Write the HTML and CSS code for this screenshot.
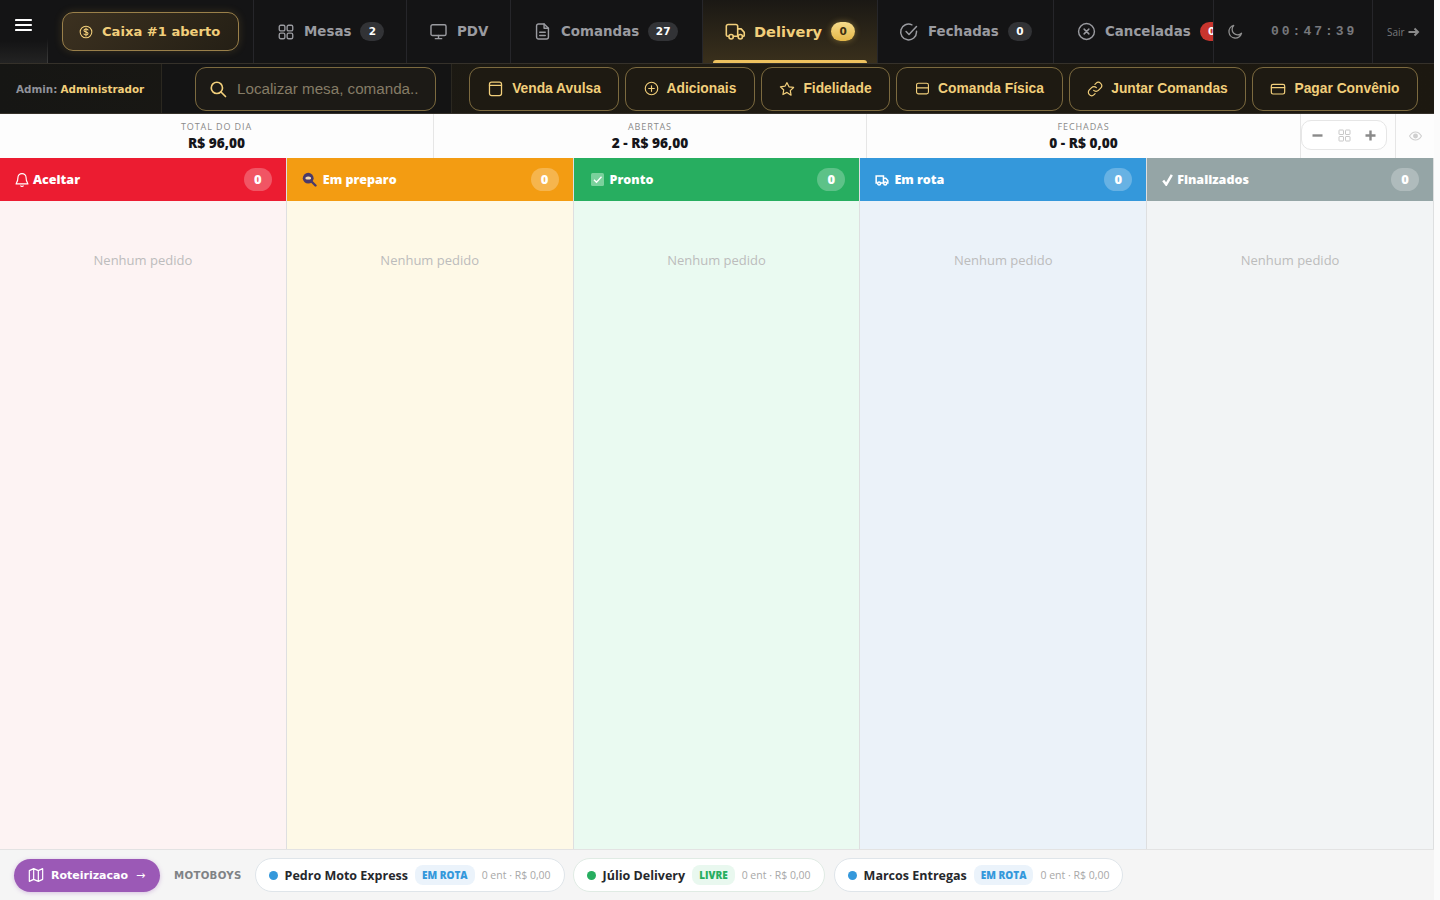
FILE: index.html
```html
<!DOCTYPE html>
<html lang="pt-BR">
<head>
    <meta charset="UTF-8">
    <title>Delivery</title>
    <link rel="stylesheet" href="styles.css">
</head>
<body>
<div class="page">

    <div class="topbar">
        <div class="menu-cell">
            <svg width="18" height="14" viewBox="0 0 18 14"><path d="M1 2h15M1 7h15M1 12h15" stroke="#fff" stroke-width="2.200" stroke-linecap="round"/></svg>
        </div>
        <div class="caixa-cell">
            <div class="caixa-btn">
                <svg class="ico" width="14" height="14" viewBox="0 0 24 24"><circle cx="12" cy="12" r="10"/><path d="M15.500 8.500c-.6-1-1.900-1.500-3.500-1.500-2 0-3.500 1-3.500 2.500s1.500 2 3.500 2.500 3.500 1 3.500 2.500-1.500 2.500-3.500 2.500c-1.600 0-2.900-.5-3.500-1.500M12 5v14"/></svg>
                <span>Caixa #1 aberto</span>
            </div>
        </div>
        <div class="tab tab-mesas">
            <svg class="ico" width="18" height="18" viewBox="0 0 24 24"><rect x="3" y="3" width="7.500" height="7.500" rx="2"/><rect x="13.500" y="3" width="7.500" height="7.500" rx="2"/><rect x="3" y="13.500" width="7.500" height="7.500" rx="2"/><rect x="13.500" y="13.500" width="7.500" height="7.500" rx="2"/></svg>
            <span>Mesas</span><b class="pill">2</b>
        </div>
        <div class="tab tab-pdv">
            <svg class="ico" width="19" height="19" viewBox="0 0 24 24"><rect x="2.500" y="3.500" width="19" height="13.500" rx="2"/><path d="M12 17v4M8 21h8"/></svg>
            <span>PDV</span>
        </div>
        <div class="tab tab-comandas">
            <svg class="ico" width="19" height="19" viewBox="0 0 24 24"><path d="M14 2.500H7a2.500 2.500 0 0 0-2.500 2.500v14A2.500 2.500 0 0 0 7 21.500h10a2.500 2.500 0 0 0 2.500-2.500V8z"/><path d="M14 2.500V8h5.500M8.500 13h7M8.500 17h7"/></svg>
            <span>Comandas</span><b class="pill">27</b>
        </div>
        <div class="tab tab-delivery active">
            <svg class="ico" width="21" height="21" viewBox="0 0 24 24"><path d="M14.500 17.500V6a2 2 0 0 0-2-2H3.500a2 2 0 0 0-2 2v10a1.500 1.500 0 0 0 1.500 1.500h1M9.500 17.500h5M14.500 9h4l3.500 4v3.500a1 1 0 0 1-1 1h-1"/><circle cx="7" cy="18" r="2.500"/><circle cx="17.500" cy="18" r="2.500"/></svg>
            <span>Delivery</span><b class="pill pill-gold">0</b>
        </div>
        <div class="tab tab-fechadas">
            <svg class="ico" width="20" height="20" viewBox="0 0 24 24"><path d="M21 11v1a9.500 9.500 0 1 1-5.500-8.600"/><path d="M8.500 11.500l3.500 3.500 9-9.500"/></svg>
            <span>Fechadas</span><b class="pill">0</b>
        </div>
        <div class="tab tab-canceladas">
            <svg class="ico" width="19" height="19" viewBox="0 0 24 24"><circle cx="12" cy="12" r="10"/><path d="M9 9l6 6M15 9l-6 6"/></svg>
            <span>Canceladas</span><b class="pill pill-red">0</b>
        </div>
        <div class="top-right">
            <div class="moon">
                <svg class="ico" width="17" height="17" viewBox="0 0 24 24"><path d="M20.500 14.500A9 9 0 1 1 9.500 3.500a7.500 7.500 0 0 0 11 11z"/></svg>
            </div>
            <div class="clock">00:47:39</div>
            <div class="sair">Sair <svg width="12" height="10" viewBox="0 0 12 10"><path d="M0.500 5h9M6.500 1.500L10 5l-3.500 3.500" fill="none" stroke="#8a8a8a" stroke-width="2"/></svg></div>
        </div>
    </div>

    <div class="toolbar">
        <div class="admin"><span>Admin:</span> <b>Administrador</b></div>
        <div class="search-cell">
            <div class="search">
                <svg class="ico" width="18" height="18" viewBox="0 0 24 24"><circle cx="10.500" cy="10.500" r="7.500"/><path d="M16 16l6 6"/></svg>
                <span>Localizar mesa, comanda..</span>
            </div>
        </div>
        <div class="actions">
            <div class="act act-venda"><svg class="ico" width="17" height="17" viewBox="0 0 24 24"><rect x="3.500" y="3" width="17" height="19" rx="3"/><path d="M3.500 7.500h17"/></svg><span>Venda Avulsa</span></div>
            <div class="act act-adic"><svg class="ico" width="15" height="15" viewBox="0 0 24 24"><circle cx="12" cy="12" r="10"/><path d="M12 7.500v9M7.500 12h9"/></svg><span>Adicionais</span></div>
            <div class="act act-fid"><svg class="ico" width="16" height="16" viewBox="0 0 24 24"><path d="M12 2.500l3 6.300 6.900.9-5 4.800 1.200 6.800L12 17.100l-6.100 3.200 1.200-6.800-5-4.800 6.900-.9z"/></svg><span>Fidelidade</span></div>
            <div class="act act-fisica"><svg class="ico" width="15" height="15" viewBox="0 0 24 24"><rect x="2.500" y="3.500" width="19" height="17" rx="3"/><path d="M2.500 11h19"/></svg><span>Comanda Física</span></div>
            <div class="act act-juntar"><svg class="ico" width="16" height="16" viewBox="0 0 24 24"><path d="M10 14a5 5 0 0 0 7.100 0l3.400-3.400a5 5 0 0 0-7.100-7.100l-1.500 1.500"/><path d="M14 10a5 5 0 0 0-7.100 0l-3.400 3.400a5 5 0 0 0 7.100 7.100l1.500-1.500"/></svg><span>Juntar Comandas</span></div>
            <div class="act act-pagar"><svg class="ico" width="16" height="16" viewBox="0 0 24 24"><rect x="2" y="5" width="20" height="14.500" rx="2.500"/><path d="M2 10h20"/></svg><span>Pagar Convênio</span></div>
        </div>
    </div>

    <div class="stats">
        <div class="stat stat-total"><small>TOTAL DO DIA</small><strong>R$ 96,00</strong></div>
        <div class="stat stat-abertas"><small>ABERTAS</small><strong>2 - R$ 96,00</strong></div>
        <div class="stat stat-fechadas"><small>FECHADAS</small><strong>0 - R$ 0,00</strong></div>
        <div class="zoom-cell">
            <div class="zoom-box">
                <svg width="11" height="11" viewBox="0 0 11 11"><path d="M0.500 5.500h10" stroke="#8a8a8a" stroke-width="2.400"/></svg>
                <svg width="13" height="13" viewBox="0 0 13 13" fill="none" stroke="#c8c8c8"><rect x="1" y="1" width="4.500" height="4.500" rx="0.500"/><rect x="7.500" y="1" width="4.500" height="4.500" rx="0.500"/><rect x="1" y="7.500" width="4.500" height="4.500" rx="0.500"/><rect x="7.500" y="7.500" width="4.500" height="4.500" rx="0.500"/></svg>
                <svg width="11" height="11" viewBox="0 0 11 11"><path d="M0.500 5.500h10M5.500 0.500v10" stroke="#8a8a8a" stroke-width="2.400"/></svg>
            </div>
        </div>
        <div class="eye-cell">
            <svg width="13" height="10" viewBox="0 0 24 18" fill="none" stroke="#cfcfcf" stroke-width="2"><path d="M1 9c3-5 7-7.500 11-7.500S20 4 23 9c-3 5-7 7.500-11 7.500S4 14 1 9z"/><circle cx="12" cy="9" r="3.500" fill="#cfcfcf"/></svg>
        </div>
    </div>

    <div class="board">
        <div class="col col-aceitar">
            <div class="col-head">
                <svg class="head-ico" width="14" height="16" viewBox="0 0 24 26" fill="none" stroke="#fff" stroke-width="2"><path d="M12 2a7 7 0 0 0-7 7c0 7-3 9-3 10.500h20C22 18 19 16 19 9a7 7 0 0 0-7-7zM9.500 22.500a2.700 2.700 0 0 0 5 0"/></svg>
                <span>Aceitar</span><b class="count">0</b>
            </div>
            <div class="empty">Nenhum pedido</div>
        </div>
        <div class="col col-preparo">
            <div class="col-head">
                <svg class="head-ico" width="15" height="15" viewBox="0 0 15 15"><path d="M9.500 9.500l4 4" stroke="#4a3a6a" stroke-width="2.400" stroke-linecap="round"/><circle cx="6.200" cy="6.200" r="5.400" fill="#4a3a6a"/><path d="M3.500 5.500c1.500-1.200 4-1.200 5.500 0v1.500c-1.500 .8-4 .8-5.500 0z" fill="#f5d9b0"/></svg>
                <span>Em preparo</span><b class="count">0</b>
            </div>
            <div class="empty">Nenhum pedido</div>
        </div>
        <div class="col col-pronto">
            <div class="col-head">
                <svg class="head-ico" width="13" height="13" viewBox="0 0 13 13"><rect width="13" height="13" rx="1.500" fill="#7bd19c"/><path d="M3 6.800l2.500 2.500L10.500 3.800" fill="none" stroke="#fff" stroke-width="1.300"/></svg>
                <span>Pronto</span><b class="count">0</b>
            </div>
            <div class="empty">Nenhum pedido</div>
        </div>
        <div class="col col-rota">
            <div class="col-head">
                <svg class="head-ico" width="14" height="14" viewBox="0 0 24 24" fill="none" stroke="#fff" stroke-width="2.600"><path d="M14.500 17V5H2v12h2M9.500 17h5M14.500 9h4l3.500 4v4h-2"/><circle cx="7" cy="18" r="2.500"/><circle cx="17.500" cy="18" r="2.500"/></svg>
                <span>Em rota</span><b class="count">0</b>
            </div>
            <div class="empty">Nenhum pedido</div>
        </div>
        <div class="col col-final">
            <div class="col-head">
                <svg class="head-ico" width="11" height="12" viewBox="0 0 11 12" fill="none" stroke="#fff" stroke-width="2.500"><path d="M1.200 6.500L4.200 10.500 9.800 0.800"/></svg>
                <span>Finalizados</span><b class="count">0</b>
            </div>
            <div class="empty">Nenhum pedido</div>
        </div>
    </div>

    <div class="footer">
        <div class="route-btn">
            <svg width="16" height="16" viewBox="0 0 24 24" fill="none" stroke="#fff" stroke-width="1.800" stroke-linejoin="round"><path d="M2 5.500l6.500-3 7 3 6.500-3v16l-6.500 3-7-3-6.500 3zM8.500 2.500v16M15.500 5.500v16"/></svg>
            <span>Roteirizacao</span><i>→</i>
        </div>
        <div class="moto-label">MOTOBOYS</div>
        <div class="moto">
            <i class="dot dot-blue"></i><b>Pedro Moto Express</b><span class="tag tag-rota">EM ROTA</span><span class="info">0 ent · R$ 0,00</span>
        </div>
        <div class="moto moto-livre">
            <i class="dot dot-green"></i><b>Júlio Delivery</b><span class="tag tag-livre">LIVRE</span><span class="info">0 ent · R$ 0,00</span>
        </div>
        <div class="moto">
            <i class="dot dot-blue"></i><b>Marcos Entregas</b><span class="tag tag-rota">EM ROTA</span><span class="info">0 ent · R$ 0,00</span>
        </div>
    </div>

</div>
</body>
</html>
```

FILE: styles.css
```css
* {
    box-sizing: border-box;
}

body {
    margin: 0;
    background-color: #fbfbfb;
    font-family: "Open Sans", sans-serif;
    overflow: hidden;
}

.page {
    display: flex;
    flex-direction: column;
    width: 1434px;
    height: 900px;
}

.ico {
    fill: none;
    stroke: currentColor;
    stroke-width: 1.800;
    stroke-linecap: round;
    stroke-linejoin: round;
    flex-shrink: 0;
}

/* top bar */
.topbar {
    display: flex;
    height: 64px;
    flex-shrink: 0;
    background-color: #141415;
    border-bottom: 1px solid #35312a;
    font-family: "DejaVu Sans", sans-serif;
}

.menu-cell {
    width: 48px;
    padding: 17px 0 0 15px;
    border-right: 1px solid;
    border-image: linear-gradient(transparent 60%, #3c3c3c) 1;
    background: linear-gradient(#141415 65%, #232323);
}

.caixa-cell {
    display: flex;
    align-items: center;
    width: 206px;
    padding-left: 14px;
    border-right: 1px solid #26262a;
}

.caixa-btn {
    display: flex;
    align-items: center;
    gap: 9px;
    width: 177px;
    height: 39px;
    padding-left: 16px;
    border: 1.500px solid #9a804a;
    border-radius: 11px;
    background: linear-gradient(135deg, #3c3120, #241f15);
    box-shadow: 0 0 8px rgba(200, 160, 70, 0.2);
    color: #f2cf7b;
    font-size: 13.100px;
    font-weight: bold;
    white-space: nowrap;
}

.tab {
    display: flex;
    align-items: center;
    gap: 9px;
    height: 63px;
    padding-left: 23px;
    border-right: 1px solid #26262a;
    color: #9a9ba0;
    font-size: 13.400px;
    font-weight: bold;
    white-space: nowrap;
    flex-shrink: 0;
}

.tab-mesas { width: 153px; }
.tab-pdv { width: 104px; padding-left: 22px; }
.tab-comandas { width: 192px; padding-left: 22px; }
.tab-comandas .pill { min-width: 30px; }
.tab-delivery { width: 175px; padding-left: 22px; gap: 8px; }
.tab-fechadas { width: 176px; padding-left: 21px; }
.tab-canceladas { width: 159px; overflow: hidden; border-right: 0; }

.tab-delivery.active {
    position: relative;
    background: linear-gradient(#1a1814, #3a301c);
    color: #f2cf7b;
    font-size: 14.600px;
}

.tab-delivery.active::after {
    content: "";
    position: absolute;
    left: 10px;
    right: 10px;
    bottom: 0;
    height: 3px;
    border-radius: 3px 3px 0 0;
    background-color: #eec25f;
}

.pill {
    min-width: 24px;
    height: 19px;
    padding: 0 7px;
    border-radius: 10px;
    background-color: #323336;
    color: #fff;
    font-size: 10.500px;
    line-height: 19px;
    text-align: center;
}

.pill-gold {
    margin-left: 1px;
    background: linear-gradient(#f7dc8b, #e3b648);
    color: #3d2f10;
    box-shadow: 0 0 6px rgba(240, 200, 90, 0.4);
}

.pill-red {
    background-color: #c8352e;
}

.top-right {
    display: flex;
    align-items: center;
    flex: 1;
    min-width: 0;
    border-left: 1px solid #26262a;
}

.moon {
    display: flex;
    width: 42px;
    padding-left: 13px;
    color: #8f8f8f;
}

.clock {
    width: 116px;
    padding-left: 15px;
    color: #77787c;
    font-family: "Liberation Mono", monospace;
    font-size: 13px;
    font-weight: bold;
    letter-spacing: 3px;
    white-space: nowrap;
}

.sair {
    display: flex;
    align-items: center;
    gap: 3px;
    align-self: stretch;
    padding-left: 14px;
    flex: 1;
    border-left: 1px solid #26262a;
    color: #77787c;
    font-family: "Open Sans", sans-serif;
    font-size: 10px;
}

/* second row */
.toolbar {
    display: flex;
    align-items: center;
    height: 50px;
    flex-shrink: 0;
    background: linear-gradient(90deg, #161614, #1f1b12 50%, #1c1810);
    border-bottom: 1px solid #35312a;
    font-family: "Liberation Sans", sans-serif;
}

.admin {
    display: flex;
    align-items: center;
    gap: 3px;
    width: 162px;
    height: 100%;
    padding-left: 16px;
    border-right: 1px solid #2b2820;
    font-family: "DejaVu Sans", sans-serif;
    font-size: 10.400px;
    white-space: nowrap;
}

.admin span {
    color: #8f9299;
    font-weight: bold;
}

.admin b {
    color: #f2cf7b;
}

.search-cell {
    display: flex;
    align-items: center;
    width: 290px;
    height: 100%;
    padding-left: 33px;
    border-right: 1px solid #2b2820;
    background-color: #141414;
}

.search {
    display: flex;
    align-items: center;
    gap: 10px;
    width: 241px;
    height: 44px;
    padding-left: 13px;
    border: 1px solid #7c6a3f;
    border-radius: 11px;
    background-color: #1c1a16;
    color: #f2cf7b;
    white-space: nowrap;
}

.search .ico {
    stroke-width: 2.200;
}

.search span {
    color: #857c66;
    font-size: 15.200px;
    padding-bottom: 1px;
}

.actions {
    display: flex;
    gap: 6px;
    padding-left: 17px;
}

.act {
    display: flex;
    align-items: center;
    justify-content: center;
    gap: 8px;
    height: 44px;
    border: 1px solid #7c6a3f;
    border-radius: 11px;
    background-color: #1e1a12;
    color: #f2cf7b;
    font-size: 13.800px;
    font-weight: bold;
    white-space: nowrap;
}

.act span {
    padding-bottom: 1px;
}

.act-venda { width: 150px; }
.act-adic { width: 130px; }
.act-fid { width: 129px; }
.act-fisica { width: 167px; }
.act-juntar { width: 177px; }
.act-pagar { width: 166px; }

/* stats row */
.stats {
    display: flex;
    height: 44px;
    flex-shrink: 0;
    background-color: #fdfdfd;
}

.stat {
    display: flex;
    flex-direction: column;
    align-items: center;
    padding-top: 7px;
    border-right: 1px solid #e6e6e6;
}

.stat-total { width: 434px; }
.stat-abertas { width: 433px; }
.stat-fechadas { width: 434px; }

.stat small {
    color: #8a8a8a;
    font-size: 9px;
    line-height: 11px;
    letter-spacing: 0.900px;
}

.stat strong {
    color: #15151a;
    font-size: 13.700px;
    line-height: 21px;
    font-weight: 800;
}

.zoom-cell {
    width: 95px;
    padding-top: 6px;
    border-right: 1px solid #e6e6e6;
}

.zoom-box {
    display: flex;
    align-items: center;
    justify-content: space-between;
    width: 86px;
    height: 30px;
    padding: 0 10px;
    border: 1px solid #e6e6e6;
    border-radius: 10px;
    background-color: #fff;
}

.eye-cell {
    display: flex;
    justify-content: center;
    flex: 1;
    padding-top: 17px;
}

/* kanban */
.board {
    display: flex;
    flex: 1;
    min-height: 0;
}

.col {
    width: 20%;
    border-right: 1px solid #dedfe0;
}

.col-head {
    display: flex;
    align-items: center;
    height: 43px;
    padding: 0 14px 0 15px;
    color: #fff;
    font-size: 12.500px;
    font-weight: 800;
}

.head-ico {
    margin-right: 4px;
    flex-shrink: 0;
}

.col-preparo .head-ico {
    margin-right: 6px;
}

.col-pronto .head-ico {
    margin-left: 2px;
    margin-right: 6px;
}

.col-rota .head-ico {
    margin-right: 5px;
}

.count {
    margin-left: auto;
    width: 28px;
    height: 23px;
    border-radius: 12px;
    background-color: rgba(255, 255, 255, 0.25);
    font-size: 13px;
    line-height: 23px;
    text-align: center;
}

.empty {
    padding-top: 50px;
    color: #bcbcbc;
    font-size: 13px;
    line-height: 18px;
    text-align: center;
}

.col-aceitar { background-color: #fdf3f3; }
.col-aceitar .col-head { background-color: #ec1c31; }
.col-preparo { background-color: #fef9e7; }
.col-preparo .col-head { background-color: #f39c12; }
.col-pronto { background-color: #eafaf1; }
.col-pronto .col-head { background-color: #27ae60; }
.col-rota { background-color: #ebf2f9; }
.col-rota .col-head { background-color: #3498db; }
.col-final { background-color: #f2f4f5; }
.col-final .col-head { background-color: #95a5a6; }

/* motoboys */
.footer {
    display: flex;
    align-items: center;
    gap: 8px;
    height: 51px;
    flex-shrink: 0;
    padding-left: 14px;
    border-top: 1px solid #e3e3e3;
    background-color: #f5f5f5;
}

.route-btn {
    display: flex;
    align-items: center;
    gap: 6px;
    width: 146px;
    height: 33px;
    padding-left: 14px;
    border-radius: 17px;
    background-color: #9b59b6;
    box-shadow: 0 1px 4px rgba(155, 89, 182, 0.35);
    color: #fff;
    font-family: "DejaVu Sans", sans-serif;
    font-size: 11px;
    font-weight: bold;
}

.route-btn span {
    margin-left: 1px;
}

.route-btn i {
    margin-left: 2px;
    font-style: normal;
    font-weight: normal;
}

.moto-label {
    margin-left: 6px;
    margin-right: 5px;
    color: #7f8285;
    font-family: "DejaVu Sans", sans-serif;
    font-size: 10.200px;
    font-weight: bold;
    letter-spacing: 0.300px;
}

.moto {
    display: flex;
    align-items: center;
    height: 34px;
    padding: 0 13px;
    border: 1px solid #dfe5ea;
    border-radius: 17px;
    background-color: #fff;
    white-space: nowrap;
}

.moto-livre {
    margin-right: 1px;
    border-color: #e0ebe4;
}

.moto b {
    margin-left: 7px;
    color: #26282c;
    font-size: 12.500px;
    font-weight: 700;
}

.dot {
    width: 9px;
    height: 9px;
    border-radius: 50%;
}

.dot-blue { background-color: #3498db; }
.dot-green { background-color: #27ae60; }

.tag {
    margin-left: 7px;
    padding: 0 7px;
    border-radius: 8px;
    font-size: 10px;
    font-weight: 800;
    line-height: 20px;
}

.tag-rota {
    background-color: #ebf3fb;
    color: #3498db;
}

.tag-livre {
    background-color: #e9f8ef;
    color: #27ae60;
}

.info {
    margin-left: 7px;
    color: #a8a8a8;
    font-size: 10.500px;
}
```
